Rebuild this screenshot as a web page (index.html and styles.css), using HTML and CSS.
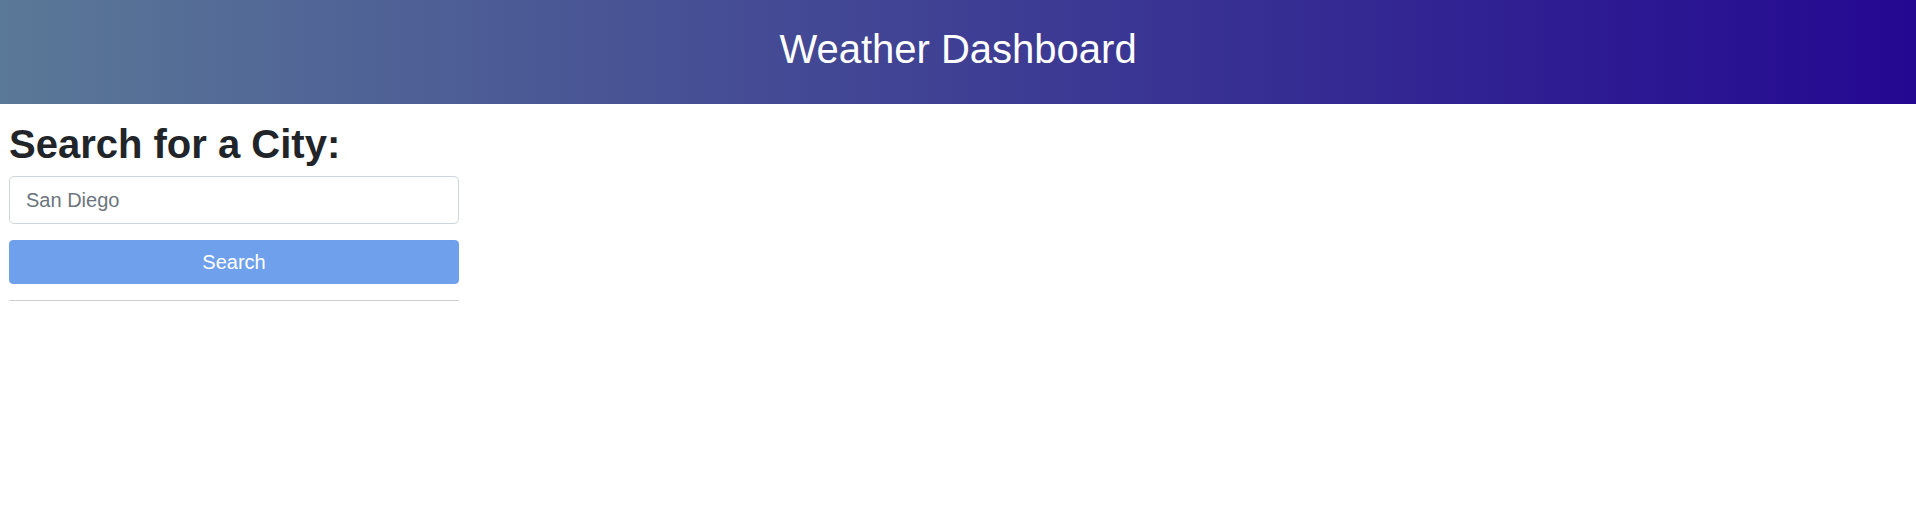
FILE: index.html
```html
<!DOCTYPE html>
<html lang="en">
<head>
<meta charset="utf-8">
<title>Weather Dashboard</title>
<link rel="stylesheet" href="styles.css">
</head>
<body>
<header class="site-header">
  <h1 class="site-title">Weather Dashboard</h1>
</header>
<main class="page">
  <aside class="search-panel">
    <h2 class="search-heading">Search for a City:</h2>
    <input class="city-input" type="text" placeholder="San Diego">
    <button class="search-btn" type="button">Search</button>
    <hr class="divider">
  </aside>
</main>
</body>
</html>
```
FILE: styles.css
```css
* { box-sizing: border-box; }
html, body { margin: 0; padding: 0; }
body {
  font-family: "Liberation Sans", Arial, Helvetica, sans-serif;
  color: #212529;
  background: #fff;
}
.site-header {
  height: 104px;
  padding-top: 25px;
  background: linear-gradient(90deg, #5a7897 0%, #240891 100%);
  text-align: center;
}
.site-title {
  margin: 0;
  font-size: 40px;
  font-weight: 400;
  line-height: 48px;
  color: #fff;
}
.page {
  padding: 16px 0 0 9px;
}
.search-panel {
  width: 450px;
  display: flex;
  flex-direction: column;
}
.search-heading {
  margin: 0 0 8px;
  font-size: 40px;
  font-weight: 700;
  line-height: 48px;
  color: #212529;
}
.city-input {
  height: 48px;
  padding: 8px 16px;
  font-family: inherit;
  font-size: 20px;
  line-height: 30px;
  color: #495057;
  background: #fff;
  border: 1px solid #ced4da;
  border-radius: 5px;
  outline: none;
}
.city-input::placeholder {
  color: #6c757d;
  opacity: 1;
}
.search-btn {
  margin-top: 16px;
  height: 44px;
  padding: 6px 12px;
  font-family: inherit;
  font-size: 20px;
  line-height: 30px;
  color: #fff;
  background: #6fa0ec;
  border: 1px solid #6fa0ec;
  border-radius: 4px;
}
.divider {
  margin: 16px 0 0;
  border: 0;
  border-top: 1px solid #cfcfcf;
}
```
